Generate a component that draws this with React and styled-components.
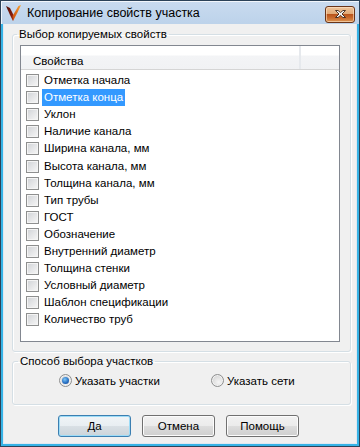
import React from "react";
import styled, { createGlobalStyle, css } from "styled-components";

const GlobalStyle = createGlobalStyle`
  html, body { margin: 0; padding: 0; background: #ffffff; }
  body { width: 360px; height: 447px; overflow: hidden; }
  * { box-sizing: border-box; }
`;

const Window = styled.div`
  width: 360px;
  height: 447px;
  border: 1px solid #2c4258;
  background: linear-gradient(#c9dbef, #b9d0e9 30px);
  display: flex;
  flex-direction: column;
  font-family: "Liberation Sans", Arial, sans-serif;
  box-shadow: inset 1px 1px 0 rgba(255, 255, 255, 0.75);
`;

const TitleBar = styled.div`
  height: 23px;
  display: flex;
  align-items: center;
  padding: 0 4px 0 4px;
  gap: 6px;
`;

const TitleText = styled.div`
  flex: 1;
  font-size: 12.5px;
  color: #000;
  padding-top: 1px;
`;

const CloseButton = styled.div`
  width: 30px;
  height: 17px;
  margin-top: 3px;
  border: 1px solid #6a3418;
  border-radius: 3px;
  background: linear-gradient(
    #eec39a 0%,
    #e2aa77 45%,
    #b9541c 50%,
    #c8682b 70%,
    #dc9552 100%
  );
  box-shadow: inset 0 0 0 1px rgba(255, 230, 200, 0.6);
  display: flex;
  align-items: center;
  justify-content: center;
`;

const Frame = styled.div`
  flex: 1;
  display: flex;
  border: 2px solid #36b3e6;
  border-top: 0;
  box-shadow: inset 0 1px 0 #aac4de;
`;

const Client = styled.div`
  flex: 1;
  background: #f0f0f0;
  border-left: 1px solid #dfe8f1;
  border-right: 1px solid #dfe8f1;
  border-bottom: 1px solid #dfe8f1;
  display: flex;
  flex-direction: column;
  font-size: 11.5px;
  color: #000;
`;

const Group = styled.fieldset`
  margin: ${(p) => p.$top}px 5px 0 8px;
  padding: ${(p) => p.$pad};
  border: 1px solid #d5dfe5;
  border-radius: 3px;
  box-shadow: inset 1px 1px 0 #ffffff, 1px 1px 0 #ffffff;
  min-width: 0;
`;

const Legend = styled.legend`
  margin-left: ${(p) => p.$ml}px;
  padding: 0 2px;
  line-height: 13px;
  font-size: 11.5px;
`;

const ListBox = styled.div`
  height: 297px;
  border: 1px solid #828790;
  background: #ffffff;
  display: flex;
  flex-direction: column;
`;

const Header = styled.div`
  height: 24px;
  display: flex;
  border-bottom: 1px solid #d5d5d5;
  background: linear-gradient(#ffffff 0, #ffffff 9px, #f3f4f6 10px, #f1f2f4 100%);
`;

const HeaderCell = styled.div`
  width: ${(p) => p.$w};
  flex: ${(p) => (p.$grow ? 1 : "none")};
  display: flex;
  align-items: center;
  padding-left: 12px;
  padding-top: 6px;
  border-right: ${(p) => (p.$divider ? "2px solid #e6e9ed" : "0")};
`;

const Rows = styled.div`
  padding-top: 2px;
  display: flex;
  flex-direction: column;
`;

const Row = styled.div`
  height: 17.1px;
  display: flex;
  align-items: center;
  padding-left: 5px;
`;

const CheckBox = styled.span`
  width: 13px;
  height: 13px;
  flex: none;
  border: 1px solid #8e8f8f;
  background: linear-gradient(135deg, #cfd2d6 0%, #e4e5e7 50%, #f7f7f7 100%);
  box-shadow: inset 0 0 0 1px #f4f4f4;
  margin-right: 3px;
`;

const RowLabel = styled.span`
  height: 17px;
  line-height: 17px;
  padding: 0 2px 0 2px;
  white-space: nowrap;
  ${(p) =>
    p.$selected &&
    css`
      background: #3399ff;
      color: #ffffff;
    `}
`;

const RadioRow = styled.div`
  display: grid;
  grid-template-columns: 152px auto;
  padding-left: 46px;
  height: 15px;
  align-items: center;
`;

const RadioItem = styled.label`
  display: flex;
  align-items: center;
  gap: 3px;
  white-space: nowrap;
`;

const Radio = styled.span`
  width: 13px;
  height: 13px;
  border-radius: 50%;
  border: 1px solid #8e8f8f;
  background: radial-gradient(circle at 60% 65%, #f6f6f6 0%, #dcdcdc 60%, #c9cbce 100%);
  box-shadow: inset 0 0 0 1px #f2f2f2;
  display: flex;
  align-items: center;
  justify-content: center;
  flex: none;
  &::after {
    content: "";
    display: ${(p) => (p.$checked ? "block" : "none")};
    width: 7px;
    height: 7px;
    border-radius: 50%;
    background: radial-gradient(circle at 40% 35%, #7cc6f7 0%, #2a72c4 55%, #11408a 100%);
  }
`;

const ButtonRow = styled.div`
  display: flex;
  gap: 11px;
  padding-left: 54px;
  margin-top: 10px;
`;

const Button = styled.button`
  width: 73px;
  height: 22px;
  font-family: inherit;
  font-size: 11.5px;
  color: #000;
  padding: 0;
  border: 1px solid ${(p) => (p.$default ? "#3c7fb1" : "#707070")};
  border-radius: 3px;
  background: ${(p) =>
    p.$default
      ? "linear-gradient(#f0f4f7 0%, #e8eef2 50%, #d9e0e5 50%, #ccd4da 100%)"
      : "linear-gradient(#f2f2f2 0%, #ebebeb 50%, #dddddd 50%, #cfcfcf 100%)"};
  box-shadow: inset 0 0 0 1px ${(p) => (p.$default ? "#9ddcf7" : "#fcfcfc")};
`;

const items = [
  "Отметка начала",
  "Отметка конца",
  "Уклон",
  "Наличие канала",
  "Ширина канала, мм",
  "Высота канала, мм",
  "Толщина канала, мм",
  "Тип трубы",
  "ГОСТ",
  "Обозначение",
  "Внутренний диаметр",
  "Толщина стенки",
  "Условный диаметр",
  "Шаблон спецификации",
  "Количество труб",
];

const AppIcon = () => (
  <svg width="16" height="17" viewBox="0 0 16 17">
    <defs>
      <linearGradient id="lw" x1="0" y1="0" x2="1" y2="1">
        <stop offset="0" stopColor="#4e0f07" />
        <stop offset="1" stopColor="#a3260e" />
      </linearGradient>
      <linearGradient id="rw" x1="0" y1="1" x2="1" y2="0">
        <stop offset="0" stopColor="#c8440c" />
        <stop offset="1" stopColor="#f7a431" />
      </linearGradient>
    </defs>
    <polygon points="1,2 5,4 9,12 8,17 5,11" fill="url(#lw)" />
    <polygon points="8,17 7.5,12 13.5,2 16,1 12.5,8.5" fill="url(#rw)" />
  </svg>
);

const CloseGlyph = () => (
  <svg width="13" height="10" viewBox="0 0 13 10">
    <path
      d="M1.5 1.5 L4 1.5 L6.5 3.6 L9 1.5 L11.5 1.5 L8 5 L11.5 8.5 L9 8.5 L6.5 6.4 L4 8.5 L1.5 8.5 L5 5 Z"
      fill="#ffffff"
      stroke="#3a2418"
      strokeWidth="0.9"
      strokeLinejoin="round"
    />
  </svg>
);

export default function App() {
  return (
    <>
      <GlobalStyle />
      <Window>
        <TitleBar>
          <AppIcon />
          <TitleText>Копирование свойств участка</TitleText>
          <CloseButton>
            <CloseGlyph />
          </CloseButton>
        </TitleBar>
        <Frame>
          <Client>
            <Group $top={4} $pad="4px 10px 9px 7px">
              <Legend $ml={-3}>Выбор копируемых свойств</Legend>
              <ListBox>
                <Header>
                  <HeaderCell $w="280px" $divider>
                    Свойства
                  </HeaderCell>
                  <HeaderCell $grow />
                </Header>
                <Rows>
                  {items.map((t, i) => (
                    <Row key={t}>
                      <CheckBox />
                      <RowLabel $selected={i === 1}>{t}</RowLabel>
                    </Row>
                  ))}
                </Rows>
              </ListBox>
            </Group>
            <Group $top={3} $pad="5px 0 16px 0">
              <Legend $ml={5}>Способ выбора участков</Legend>
              <RadioRow>
                <RadioItem>
                  <Radio $checked />
                  Указать участки
                </RadioItem>
                <RadioItem>
                  <Radio />
                  Указать сети
                </RadioItem>
              </RadioRow>
            </Group>
            <ButtonRow>
              <Button $default>Да</Button>
              <Button>Отмена</Button>
              <Button>Помощь</Button>
            </ButtonRow>
          </Client>
        </Frame>
      </Window>
    </>
  );
}
